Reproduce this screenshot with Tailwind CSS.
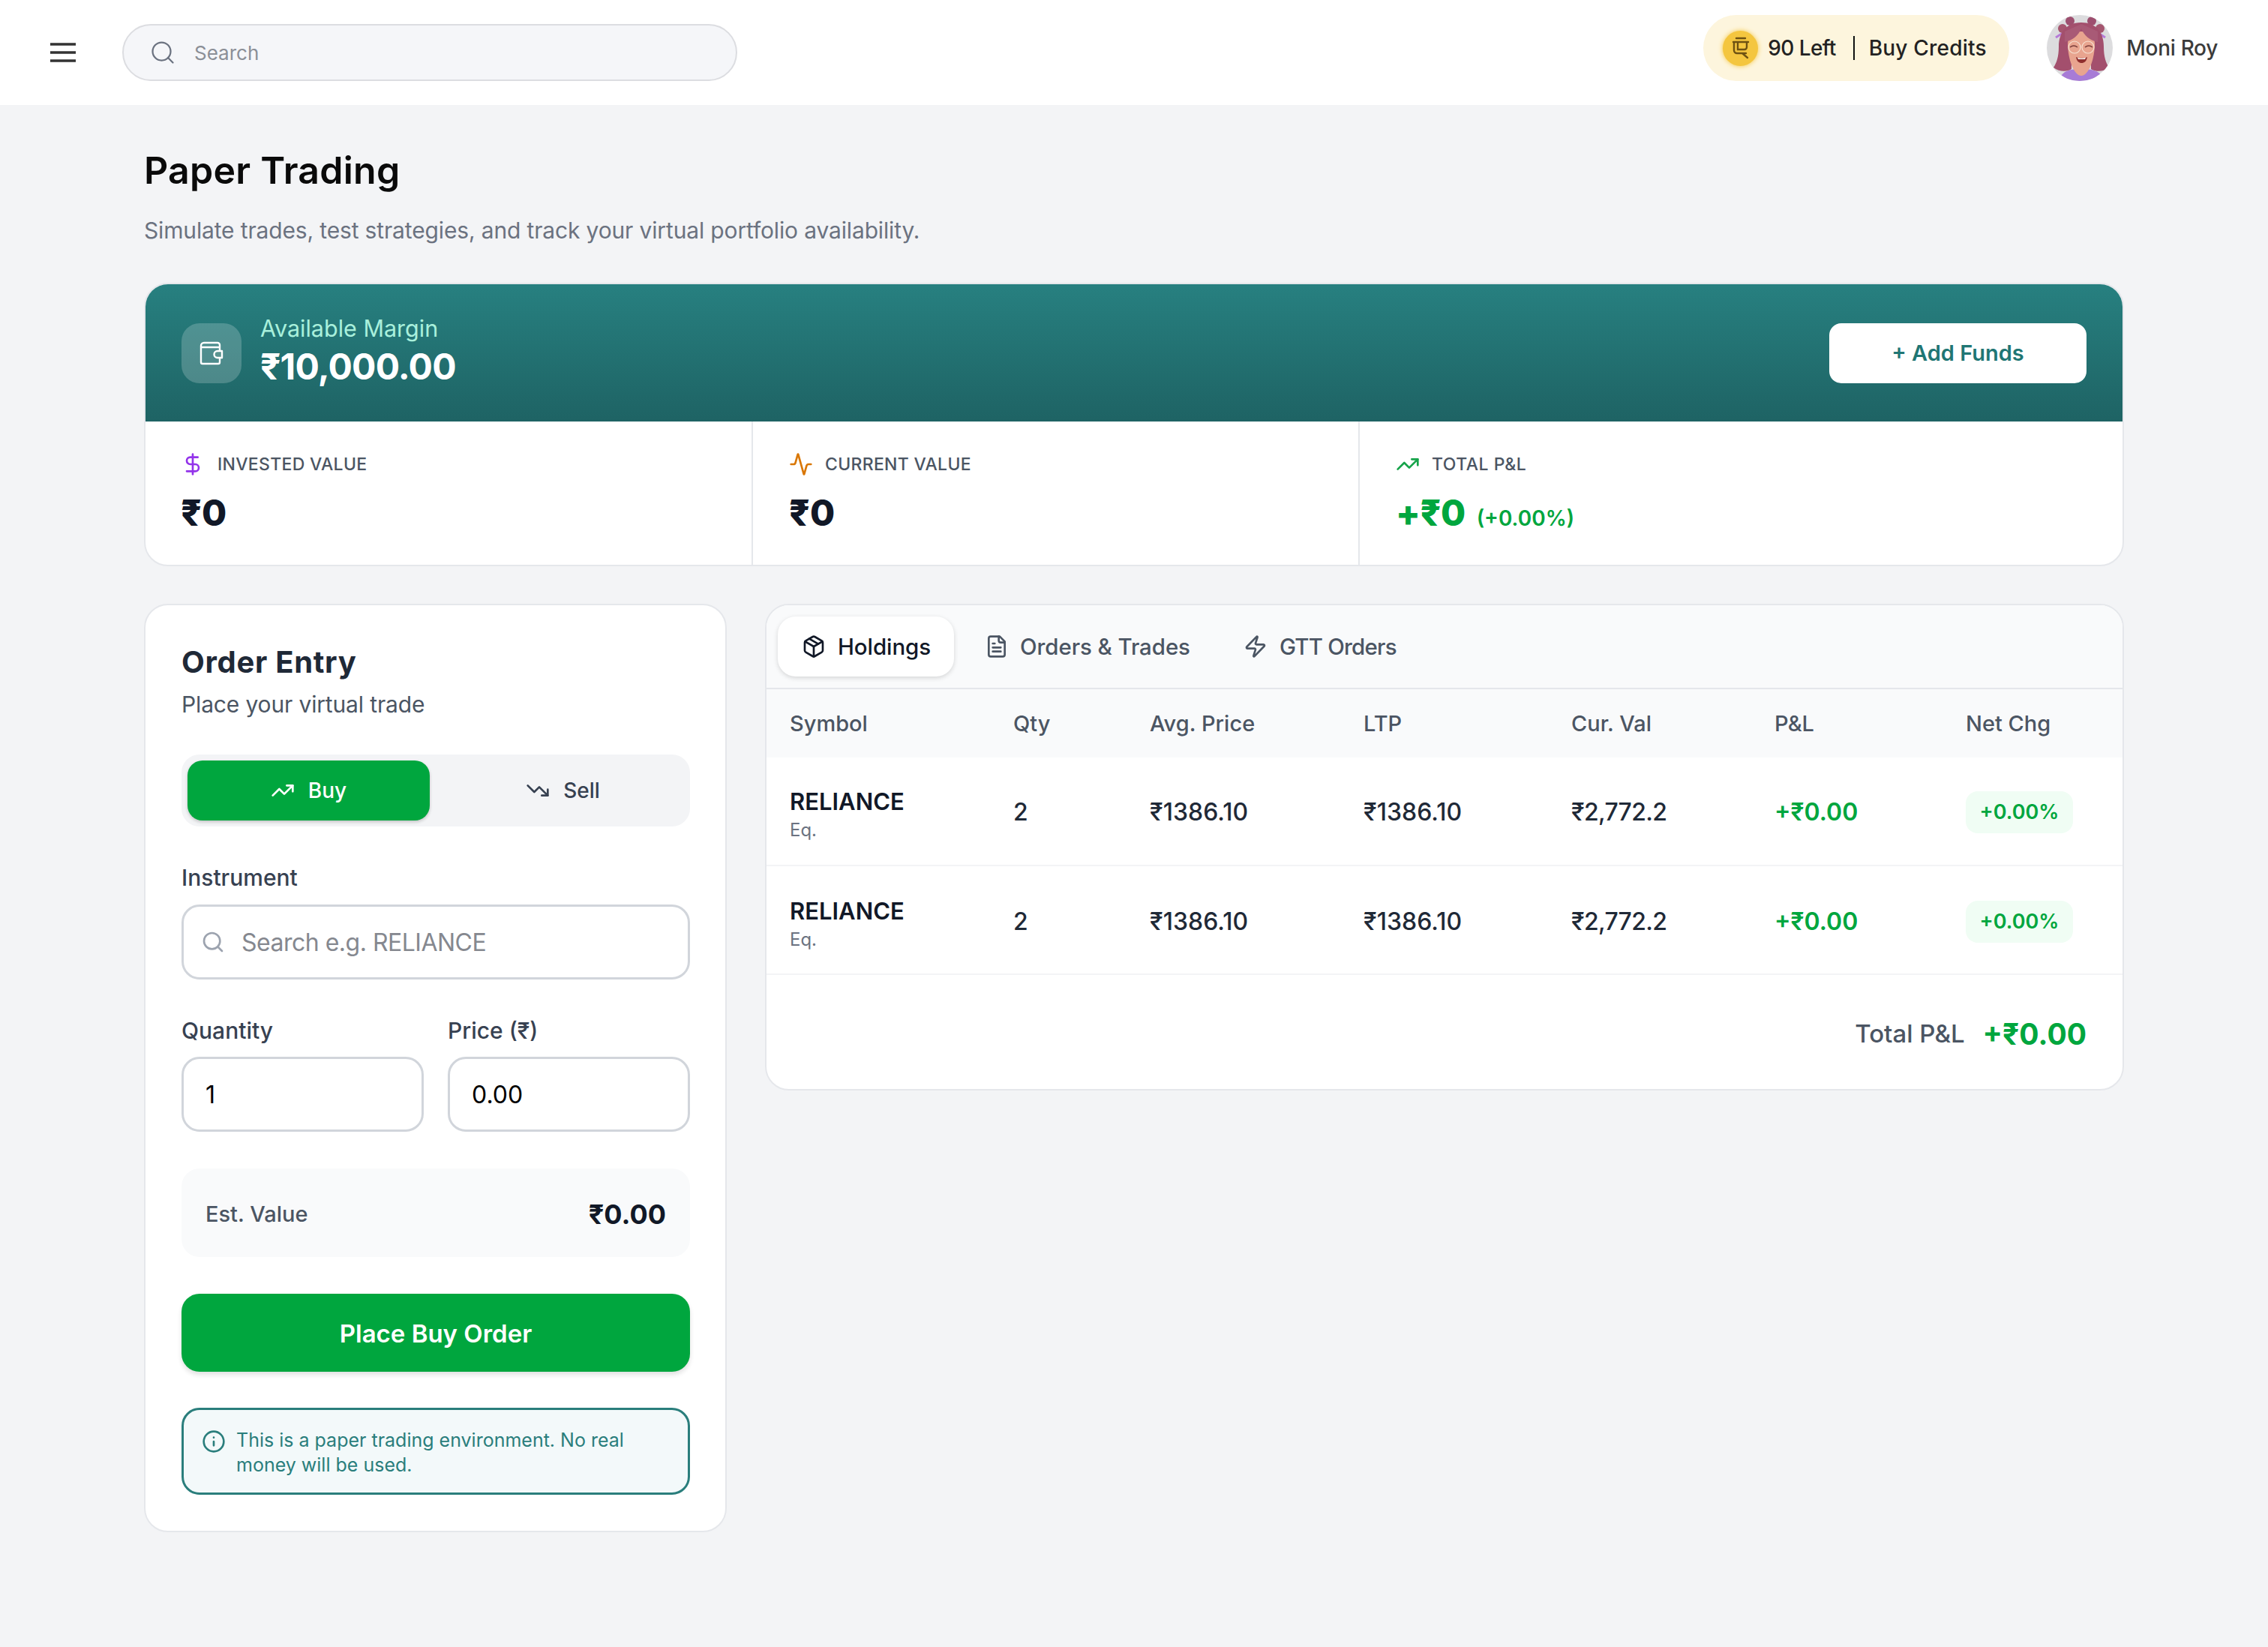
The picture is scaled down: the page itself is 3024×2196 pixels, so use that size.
<!DOCTYPE html>
<html lang="en">
<head>
<meta charset="utf-8">
<title>Paper Trading</title>
<script src="https://cdn.jsdelivr.net/npm/@tailwindcss/browser@4"></script>
</head>
<body class="font-['Inter',sans-serif] bg-[#f3f4f6] min-h-[2196px]">
<header class="h-[140px] bg-white flex items-center pl-[66px] pr-[67px]">
  <svg class="w-[36px] h-[36px] shrink-0 text-[#333]" viewBox="0 0 36 36" fill="none" stroke="currentColor" stroke-width="3.4"><path d="M1 7h34M1 18h34M1 29h34"/></svg>
  <div class="ml-[61px] w-[820px] h-[76px] rounded-full bg-[#f5f6f9] border-2 border-[#dcdde1] flex items-center pl-[34px]">
    <svg class="w-[36px] h-[36px] text-[#6b7280]" viewBox="0 0 24 24" fill="none" stroke="currentColor" stroke-width="1.5" stroke-linecap="round"><circle cx="11" cy="11" r="8"/><path d="m21 21-4.3-4.3"/></svg>
    <span class="ml-[24px] text-[26px] text-[#8b8f97]">Search</span>
  </div>
  <div class="ml-auto self-start mt-[20px] h-[88px] w-[408px] rounded-full bg-[#fdf5dd] flex items-center pl-[26px] text-[28px] font-medium text-[#222]">
    <span class="w-[47px] h-[47px] rounded-full bg-[#f4c63f] shadow-[0_0_6px_#f4c63f] flex items-center justify-center shrink-0">
      <svg class="w-[28px] h-[30px]" viewBox="0 0 28 30" fill="none" stroke="#6e5212" stroke-width="2.4" stroke-linecap="round"><path d="M8 2h12M4 7h20M5 7v11a4 4 0 0 0 4 4h12M10 7v10h9a3 3 0 0 0 3-3V7M16 22l7 6"/></svg>
    </span>
    <span class="ml-[13px] tracking-[-0.6px]">90 Left</span>
    <span class="ml-[23px] w-[2px] h-[32px] bg-[#111]"></span>
    <span class="ml-[19px] tracking-[0.2px]">Buy Credits</span>
  </div>
  <div class="ml-[50px] self-start mt-[20px] w-[88px] h-[88px] rounded-full overflow-hidden shrink-0">
    <svg class="w-full h-full" viewBox="0 0 88 88">
      <rect width="88" height="88" fill="#dcdcde"/>
      <path d="M17 88c2-12 10-16 29-16s27 4 29 16z" fill="#a77bd6"/>
      <path d="M12 30l14-9M78 30l-14-9" stroke="#b57bd8" stroke-width="3"/>
      <circle cx="31" cy="8" r="6" fill="#9d4f6f"/><circle cx="60" cy="8" r="6" fill="#9d4f6f"/>
      <circle cx="21" cy="18" r="6" fill="#a5566f"/><circle cx="71" cy="18" r="6" fill="#a5566f"/>
      <path d="M46 10C24 10 16 26 16 42c0 14-3 22-7 28 8 6 18 6 24 2V40h26v32c6 4 16 4 24-2-4-6-7-14-7-28 0-16-8-32-30-32z" fill="#a34f6d"/>
      <path d="M28 38c0-12 8-16 18-16s18 4 18 16c0 20-8 43-18 43S28 58 28 38z" fill="#e8a48f"/>
      <path d="M24 36c10-2 18-8 22-18 4 10 12 16 22 18V22l-22-10-22 10z" fill="#a85a76"/>
      <path d="M31 43q5-4 10 0M51 43q5-4 10 0" stroke="#7b3d3a" stroke-width="1.6" fill="none"/>
      <circle cx="37" cy="43" r="8" fill="none" stroke="#f6e2d3" stroke-width="1.2"/><circle cx="55" cy="43" r="8" fill="none" stroke="#f6e2d3" stroke-width="1.2"/>
      <path d="M39 56c5 2 11 2 15 0-1 6-4 8-7.500 8s-6.500-2-7.500-8z" fill="#8f2f2f"/><path d="M41 57c3 1 8 1 11 0l-1 2h-9z" fill="#fff"/>
    </svg>
  </div>
  <span class="ml-[18px] self-start mt-[46px] text-[28px] leading-[36px] font-medium text-[#3b3b3b] tracking-[-0.3px]">Moni Roy</span>
</header>

<main class="pl-[192px] pr-[192px]">
  <h1 class="pt-[55px] text-[50px] leading-[64px] font-semibold text-[#0a0a0a] tracking-[0.25px]">Paper Trading</h1>
  <p class="mt-[28px] text-[30px] leading-[40px] text-[#6b7280] tracking-[-0.15px]">Simulate trades, test strategies, and track your virtual portfolio availability.</p>

  <section class="mt-[50px] h-[378px] rounded-[32px] border-2 border-[#e5e7eb] bg-white overflow-hidden">
    <div class="h-[183px] bg-gradient-to-b from-[#278080] to-[#1e6364] flex items-center pl-[48px] pr-[48px]">
      <div class="w-[80px] h-[80px] rounded-[24px] bg-white/20 flex items-center justify-center">
        <svg class="w-[36px] h-[36px]" viewBox="0 0 36 36" fill="none" stroke="#fff" stroke-width="2.400" stroke-linejoin="round"><path d="M4 8a4 4 0 0 1 4-4h18a3 3 0 0 1 3 3v3H4M4 8v22a2 2 0 0 0 2 2h21a2 2 0 0 0 2-2V10"/><path d="M32 15h-6a3 3 0 0 0 0 9h6z" fill="#5a9490"/></svg>
      </div>
      <div class="ml-[25px] -mt-[5px]">
        <p class="text-[30.5px] leading-[36px] text-[#a9f0dc]">Available Margin</p>
        <p class="mt-[5px] text-[48px] leading-[56px] font-bold text-white tracking-[-0.8px]">₹10,000.00</p>
      </div>
      <button class="ml-auto w-[343px] h-[80px] rounded-[16px] bg-white text-[29px] font-semibold text-[#1f7674]">+ Add Funds</button>
    </div>
    <div class="grid grid-cols-[810px_809px_1fr] h-[191px]">
      <div class="border-r-2 border-[#e5e7eb] pl-[47px] pt-[41px]">
        <div class="flex items-center h-[32px]">
          <svg class="w-[32px] h-[32px] text-[#9333ea]" viewBox="0 0 24 24" fill="none" stroke="currentColor" stroke-width="2" stroke-linecap="round" stroke-linejoin="round"><line x1="12" y1="2" x2="12" y2="22"/><path d="M17 5H9.500a3.500 3.500 0 0 0 0 7h5a3.500 3.500 0 0 1 0 7H6"/></svg>
          <span class="ml-[17px] text-[23px] font-medium text-[#4b5563] tracking-[0.3px]">INVESTED VALUE</span>
        </div>
        <p class="mt-[19px] text-[48px] leading-[60px] font-extrabold text-[#111827]">₹0</p>
      </div>
      <div class="border-r-2 border-[#e5e7eb] pl-[48px] pt-[41px]">
        <div class="flex items-center h-[32px]">
          <svg class="w-[32px] h-[32px] text-[#d97706]" viewBox="0 0 24 24" fill="none" stroke="currentColor" stroke-width="2" stroke-linecap="round" stroke-linejoin="round"><path d="M22 12h-2.480a2 2 0 0 0-1.930 1.460l-2.350 8.360a.25.25 0 0 1-.48 0L9.240 2.180a.25.25 0 0 0-.48 0l-2.350 8.360A2 2 0 0 1 4.490 12H2"/></svg>
          <span class="ml-[16px] text-[23px] font-medium text-[#4b5563] tracking-[0.3px]">CURRENT VALUE</span>
        </div>
        <p class="mt-[19px] text-[48px] leading-[60px] font-extrabold text-[#111827]">₹0</p>
      </div>
      <div class="pl-[48px] pt-[41px]">
        <div class="flex items-center h-[32px]">
          <svg class="w-[32px] h-[32px] text-[#16a34a]" viewBox="0 0 24 24" fill="none" stroke="currentColor" stroke-width="2" stroke-linecap="round" stroke-linejoin="round"><polyline points="22 7 13.500 15.500 8.500 10.500 2 17"/><polyline points="16 7 22 7 22 13"/></svg>
          <span class="ml-[16px] text-[23px] font-medium text-[#4b5563] tracking-[0.5px]">TOTAL P&amp;L</span>
        </div>
        <p class="mt-[19px] flex items-baseline text-[48px] leading-[60px] font-extrabold text-[#00a63e] tracking-[-0.5px]">+₹0<span class="ml-[15px] text-[28px] font-semibold tracking-normal">(+0.00%)</span></p>
      </div>
    </div>
  </section>

  <div class="mt-[50px] grid grid-cols-[777px_1fr] gap-[51px] items-start">
    <section class="h-[1238px] rounded-[32px] border-2 border-[#e5e7eb] bg-white pl-[48px] pr-[47px] pt-[48px]">
      <h2 class="text-[40px] leading-[56px] font-bold text-[#1f2937] tracking-[0.7px]">Order Entry</h2>
      <p class="mt-[10px] text-[30px] leading-[36px] text-[#4b5563] tracking-[-0.15px]">Place your virtual trade</p>
      <div class="mt-[49px] h-[96px] rounded-[24px] bg-[#f3f4f6] p-[8px] grid grid-cols-2 gap-[16px]">
        <button class="rounded-[20px] bg-[#00a63e] shadow-[0_2px_4px_rgba(0,0,0,0.2)] flex items-center justify-center text-[28px] font-medium text-white">
          <svg class="w-[32px] h-[32px] mr-[18px]" viewBox="0 0 24 24" fill="none" stroke="currentColor" stroke-width="2" stroke-linecap="round" stroke-linejoin="round"><polyline points="22 7 13.500 15.500 8.500 10.500 2 17"/><polyline points="16 7 22 7 22 13"/></svg>Buy</button>
        <button class="flex items-center justify-center text-[28px] font-medium text-[#374151]">
          <svg class="w-[32px] h-[32px] mr-[18px]" viewBox="0 0 24 24" fill="none" stroke="currentColor" stroke-width="2" stroke-linecap="round" stroke-linejoin="round"><polyline points="22 17 13.500 8.500 8.500 13.500 2 7"/><polyline points="16 17 22 17 22 11"/></svg>Sell</button>
      </div>
      <label class="block mt-[50px] text-[30px] leading-[36px] font-medium text-[#374151]">Instrument</label>
      <div class="mt-[18px] h-[100px] rounded-[24px] border-[3px] border-[#d1d5db] flex items-center pl-[23px]">
        <svg class="w-[32px] h-[32px] shrink-0 text-[#9ca3af]" viewBox="0 0 24 24" fill="none" stroke="currentColor" stroke-width="2" stroke-linecap="round"><circle cx="11" cy="11" r="8"/><path d="m21 21-4.300-4.300"/></svg>
        <input class="ml-[22px] w-full pt-[2px] text-[32px] tracking-[-0.5px] outline-none placeholder:text-[#85888f]" placeholder="Search e.g. RELIANCE">
      </div>
      <div class="mt-[50px] grid grid-cols-2 gap-[32px]">
        <div>
          <label class="block text-[30px] leading-[36px] font-medium text-[#374151]">Quantity</label>
          <input class="mt-[17px] w-full h-[100px] rounded-[24px] border-[3px] border-[#d1d5db] pl-[29px] pt-[1px] text-[32px] text-black outline-none" value="1">
        </div>
        <div>
          <label class="block text-[30px] leading-[36px] font-medium text-[#374151]">Price (₹)</label>
          <input class="mt-[17px] w-full h-[100px] rounded-[24px] border-[3px] border-[#d1d5db] pl-[29px] pt-[1px] text-[32px] text-black outline-none" value="0.00">
        </div>
      </div>
      <div class="mt-[49px] h-[118px] pt-[3px] rounded-[24px] bg-[#f9fafb] flex items-center justify-between px-[32px]">
        <span class="text-[29px] font-medium text-[#4b5563]">Est. Value</span>
        <span class="text-[36px] font-bold text-[#111827]">₹0.00</span>
      </div>
      <button class="mt-[49px] w-full h-[104px] pt-[3px] rounded-[24px] bg-[#00a63e] shadow-[0_4px_6px_rgba(0,0,0,0.12)] text-[33px] font-semibold text-white">Place Buy Order</button>
      <div class="mt-[48px] h-[116px] rounded-[24px] border-[3px] border-[#2a7e7c] bg-[#f3f9fa] flex pl-[24px] pr-[60px] pt-[24px] text-[#2a7e7c]">
        <svg class="w-[32px] h-[32px] mt-[2px] shrink-0" viewBox="0 0 24 24" fill="none" stroke="currentColor" stroke-width="2" stroke-linecap="round"><circle cx="12" cy="12" r="10"/><path d="M12 16v-4M12 8h.01"/></svg>
        <p class="ml-[14px] text-[25px] leading-[33px]">This is a paper trading environment. No real money will be used.</p>
      </div>
    </section>

    <section class="h-[649px] rounded-[32px] border-2 border-[#e5e7eb] bg-white overflow-hidden">
      <div class="h-[112px] bg-[#f9fafb] border-b-2 border-[#e5e7eb] flex items-center pl-[15px] text-[29.5px] font-medium text-[#4b5563]">
        <div class="w-[235px] h-[80px] rounded-[24px] bg-white shadow-[0_2px_6px_rgba(0,0,0,0.15)] flex items-center pl-[32px] text-[#111827]">
          <svg class="w-[32px] h-[32px]" viewBox="0 0 24 24" fill="none" stroke="currentColor" stroke-width="2" stroke-linecap="round" stroke-linejoin="round"><path d="M11 21.730a2 2 0 0 0 2 0l7-4A2 2 0 0 0 21 16V8a2 2 0 0 0-1-1.730l-7-4a2 2 0 0 0-2 0l-7 4A2 2 0 0 0 3 8v8a2 2 0 0 0 1 1.730z"/><path d="M12 22V12"/><path d="m3.300 7 8.700 5 8.700-5"/><path d="m7.500 4.270 9 5.150"/></svg>
          <span class="ml-[16px] tracking-[-0.1px]">Holdings</span>
        </div>
        <svg class="ml-[41px] w-[32px] h-[32px]" viewBox="0 0 24 24" fill="none" stroke="currentColor" stroke-width="2" stroke-linecap="round" stroke-linejoin="round"><path d="M15 2H6a2 2 0 0 0-2 2v16a2 2 0 0 0 2 2h12a2 2 0 0 0 2-2V7Z"/><path d="M14 2v4a2 2 0 0 0 2 2h4"/><path d="M10 9H8M16 13H8M16 17H8"/></svg>
        <span class="ml-[15px] tracking-[-0.1px]">Orders &amp; Trades</span>
        <svg class="ml-[71px] w-[32px] h-[32px]" viewBox="0 0 24 24" fill="none" stroke="currentColor" stroke-width="2" stroke-linecap="round" stroke-linejoin="round"><path d="M4 14a1 1 0 0 1-.78-1.630l9.900-10.200a.5.5 0 0 1 .86.46l-1.920 6.020A1 1 0 0 0 13 10h7a1 1 0 0 1 .78 1.630l-9.900 10.200a.5.5 0 0 1-.86-.46l1.920-6.020A1 1 0 0 0 11 14z"/></svg>
        <span class="ml-[16px] tracking-[-0.8px]">GTT Orders</span>
      </div>
      <div class="h-[91px] bg-[#f9fafb] grid grid-cols-[298px_182px_285px_277px_271px_255px_1fr] items-center pl-[31px] text-[29px] font-medium text-[#4b5563]">
        <span>Symbol</span><span>Qty</span><span>Avg. Price</span><span>LTP</span><span>Cur. Val</span><span>P&amp;L</span><span>Net Chg</span>
      </div>
      <div class="h-[145px] pt-[3px] border-b-2 border-[#f3f4f6] grid grid-cols-[298px_182px_285px_277px_271px_255px_1fr] items-center pl-[31px] text-[32px] font-medium text-[#1f2937]">
        <div class="pt-[6px]"><p class="text-[31px] leading-[40px] font-semibold text-[#111827]">RELIANCE</p><p class="mt-[2px] text-[24px] leading-[32px] font-normal text-[#6b7280]">Eq.</p></div>
        <span>2</span><span>₹1386.10</span><span>₹1386.10</span><span class="tracking-[-0.7px]">₹2,772.2</span>
        <span class="font-semibold text-[#00a63e]">+₹0.00</span>
        <span class="w-[143px] h-[56px] rounded-[16px] bg-[#f0fdf4] flex items-center justify-center text-[27px] font-semibold text-[#00a63e]">+0.00%</span>
      </div>
      <div class="h-[145px] pt-[5px] border-b-2 border-[#f3f4f6] grid grid-cols-[298px_182px_285px_277px_271px_255px_1fr] items-center pl-[31px] text-[32px] font-medium text-[#1f2937]">
        <div class="pt-[6px]"><p class="text-[31px] leading-[40px] font-semibold text-[#111827]">RELIANCE</p><p class="mt-[2px] text-[24px] leading-[32px] font-normal text-[#6b7280]">Eq.</p></div>
        <span>2</span><span>₹1386.10</span><span>₹1386.10</span><span class="tracking-[-0.7px]">₹2,772.2</span>
        <span class="font-semibold text-[#00a63e]">+₹0.00</span>
        <span class="w-[143px] h-[56px] rounded-[16px] bg-[#f0fdf4] flex items-center justify-center text-[27px] font-semibold text-[#00a63e]">+0.00%</span>
      </div>
      <div class="h-[152px] pt-[6px] flex items-center justify-end pr-[48px]">
        <span class="text-[33px] font-medium text-[#4b5563]">Total P&amp;L</span>
        <span class="ml-[24px] text-[39px] font-bold text-[#00a63e]">+₹0.00</span>
      </div>
    </section>
  </div>
</main>
</body>
</html>
